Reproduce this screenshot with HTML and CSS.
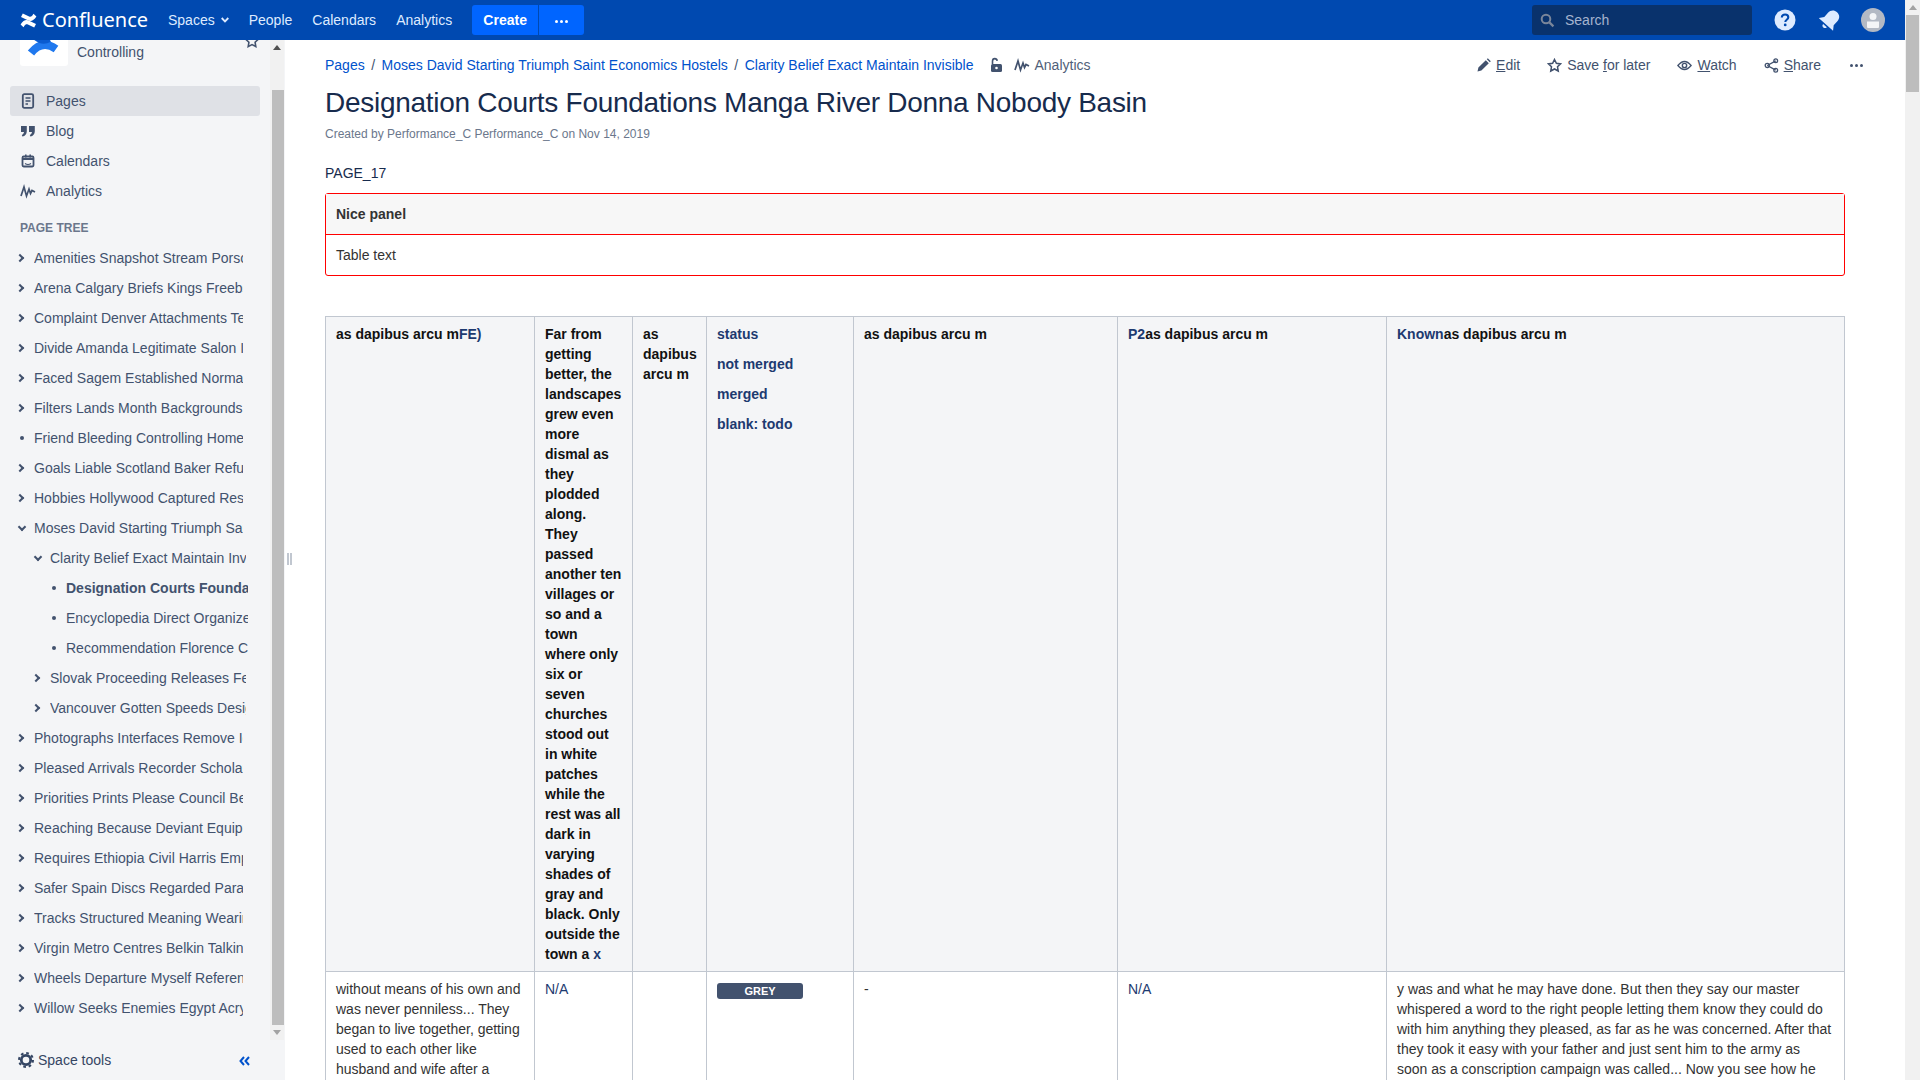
FILE: index.html
```html
<!DOCTYPE html>
<html>
<head>
    <title>Designation Courts Foundations Manga River Donna Nobody Basin</title>
    <link rel="stylesheet" href="styles.css">
</head>
<body>
<div class="page">
    <div class="window">
        <!-- top navigation -->
        <header class="topbar">
            <a class="brand">
                <svg class="brand-icon" width="17" height="15" viewBox="0 0 17 15"><path d="M0.600 11.600c2.600-4.200 5.600-5.400 8.600-3.800l6.800 3.200-1.800 3.600-6.300-3c-1.400-.6-2.600-.2-3.600 1.400l-.8 1.300z" fill="#fff"/><path d="M16.400 3.400c-2.600 4.200-5.600 5.400-8.600 3.800L1 4 2.800.4l6.300 3c1.400.6 2.600.2 3.600-1.400l.8-1.300z" fill="#fff"/></svg>
                <span class="brand-name">Confluence</span>
            </a>
            <nav class="topnav">
                <a class="topnav-item">Spaces
                    <svg width="8" height="6" viewBox="0 0 8 6"><path d="M.7 1l3.300 3.400L7.300 1" fill="none" stroke="#deebff" stroke-width="1.800"/></svg>
                </a>
                <a class="topnav-item">People</a>
                <a class="topnav-item">Calendars</a>
                <a class="topnav-item">Analytics</a>
            </nav>
            <div class="create-group">
                <button class="create-btn">Create</button>
                <button class="create-more"><span class="dots"><i></i><i></i><i></i></span></button>
            </div>
            <div class="topbar-right">
                <div class="search">
                    <svg width="15" height="15" viewBox="0 0 15 15"><circle cx="6" cy="6" r="4.300" fill="none" stroke="#7a869a" stroke-width="2"/><path d="M9.400 9.400l4 4" stroke="#7a869a" stroke-width="2.200"/></svg>
                    <span>Search</span>
                </div>
                <svg class="top-icon help" width="22" height="22" viewBox="0 0 22 22"><circle cx="11" cy="11" r="10.500" fill="#deebff"/><path d="M7.800 8.600c0-2 1.400-3.100 3.300-3.100s3.200 1.100 3.200 2.800c0 2.400-3 2.400-3 4.600" fill="none" stroke="#0049b0" stroke-width="2.100"/><circle cx="11.200" cy="15.900" r="1.400" fill="#0049b0"/></svg>
                <svg class="top-icon bell" width="22" height="22" viewBox="0 0 22 22"><g transform="rotate(42 11 11)" fill="#deebff"><path d="M11 0.500c-3.800 0-6.300 2.700-6.300 6.500v5.500L1.500 17h19l-3.200-4.500V7c0-3.800-2.500-6.500-6.300-6.500z"/><path d="M8.500 18.500h5c0 1.500-1.100 2.500-2.500 2.500s-2.500-1-2.500-2.500z"/></g></svg>
                <span class="avatar">
                    <svg width="24" height="24" viewBox="0 0 24 24"><circle cx="12" cy="12" r="12" fill="#b3b9c4"/><circle cx="12" cy="8.500" r="3.500" fill="#f4f5f7"/><path d="M6 13.500h12v5.500q0 1-1 1H7q-1 0-1-1z" fill="#f4f5f7"/></svg>
                </span>
            </div>
        </header>

        <div class="layout">
            <!-- space sidebar -->
            <aside class="sidebar">
                <div class="side-scroll">
                    <div class="side-content">
                        <div class="space-head">
                            <div class="space-logo">
                                <svg width="48" height="48" viewBox="0 0 48 48"><path d="M11 35Q22 21 36 31" fill="none" stroke="#1f78ee" stroke-width="8"/><path d="M15 20Q22 26 30 22" fill="none" stroke="#0a5bd0" stroke-width="4"/></svg>
                            </div>
                            <span class="space-name">Controlling</span>
                            <svg class="space-star" width="16" height="16" viewBox="0 0 16 16"><path d="M8 1.800l1.900 3.900 4.300.6-3.100 3 .7 4.300L8 11.600l-3.800 2 .7-4.300-3.100-3 4.300-.6z" fill="none" stroke="#42526e" stroke-width="1.600"/></svg>
                        </div>

                        <ul class="side-nav">
                            <li class="side-item active">
                                <svg width="16" height="16" viewBox="0 0 16 16"><rect x="2.800" y="1.200" width="10.400" height="13.600" rx="1.500" fill="none" stroke="#42526e" stroke-width="1.800"/><path d="M5.500 5h5M5.500 8h5M5.500 11h2.500" stroke="#42526e" stroke-width="1.500"/></svg>
                                Pages
                            </li>
                            <li class="side-item">
                                <svg width="16" height="16" viewBox="0 0 16 16"><path d="M1 3h5.800v5.200C6.800 11 5 13 2.400 13.600l-.6-1.700C3 11.400 3.800 10.500 4 9H1zM9 3h5.800v5.200c0 2.800-1.800 4.800-4.400 5.400l-.6-1.700c1.200-.5 2-1.400 2.200-2.900H9z" fill="#42526e"/></svg>
                                Blog
                            </li>
                            <li class="side-item">
                                <svg width="16" height="16" viewBox="0 0 16 16"><rect x="2.500" y="3.500" width="11" height="10" rx="1.200" fill="none" stroke="#42526e" stroke-width="1.800"/><path d="M2.500 5h11v2h-11zM5 1.500h1.600v3H5zM9.400 1.500H11v3H9.400z" fill="#42526e"/><path d="M5 10.500q3 2 6 0" fill="none" stroke="#42526e" stroke-width="1.200"/></svg>
                                Calendars
                            </li>
                            <li class="side-item">
                                <svg width="16" height="16" viewBox="0 0 16 16"><path d="M1 13l3-9 2.500 9 2.500-7 1.500 4.500 1.500-3 3 1.500" fill="none" stroke="#42526e" stroke-width="1.700"/></svg>
                                Analytics
                            </li>
                        </ul>

                        <h5 class="tree-title">PAGE TREE</h5>
                        <ul class="tree">
                            <li><div class="tree-row"><span class="twist closed"></span><a class="tree-label">Amenities Snapshot Stream Porsche Divine</a></div></li>
                            <li><div class="tree-row"><span class="twist closed"></span><a class="tree-label">Arena Calgary Briefs Kings Freebsd Lover</a></div></li>
                            <li><div class="tree-row"><span class="twist closed"></span><a class="tree-label">Complaint Denver Attachments Terrain Ball</a></div></li>
                            <li><div class="tree-row"><span class="twist closed"></span><a class="tree-label">Divide Amanda Legitimate Salon Index Kit</a></div></li>
                            <li><div class="tree-row"><span class="twist closed"></span><a class="tree-label">Faced Sagem Established Normally Bridge</a></div></li>
                            <li><div class="tree-row"><span class="twist closed"></span><a class="tree-label">Filters Lands Month Backgrounds Rocks</a></div></li>
                            <li><div class="tree-row"><span class="twist leaf"></span><a class="tree-label">Friend Bleeding Controlling Homes Ridge</a></div></li>
                            <li><div class="tree-row"><span class="twist closed"></span><a class="tree-label">Goals Liable Scotland Baker Refund Mines</a></div></li>
                            <li><div class="tree-row"><span class="twist closed"></span><a class="tree-label">Hobbies Hollywood Captured Result Sheet</a></div></li>
                            <li>
                                <div class="tree-row"><span class="twist open"></span><a class="tree-label">Moses David Starting Triumph Saint Economics</a></div>
                                <ul class="tree-sub">
                                    <li>
                                        <div class="tree-row lvl1"><span class="twist open"></span><a class="tree-label">Clarity Belief Exact Maintain Invisible</a></div>
                                        <ul class="tree-sub">
                                            <li><div class="tree-row lvl2"><span class="twist leaf"></span><a class="tree-label current">Designation Courts Foundations Manga</a></div></li>
                                            <li><div class="tree-row lvl2"><span class="twist leaf"></span><a class="tree-label">Encyclopedia Direct Organized Wallet</a></div></li>
                                            <li><div class="tree-row lvl2"><span class="twist leaf"></span><a class="tree-label">Recommendation Florence Chart Mode</a></div></li>
                                        </ul>
                                    </li>
                                    <li><div class="tree-row lvl1"><span class="twist closed"></span><a class="tree-label">Slovak Proceeding Releases Federal Pine</a></div></li>
                                    <li><div class="tree-row lvl1"><span class="twist closed"></span><a class="tree-label">Vancouver Gotten Speeds Designs Lamb</a></div></li>
                                </ul>
                            </li>
                            <li><div class="tree-row"><span class="twist closed"></span><a class="tree-label">Photographs Interfaces Remove Idea Wood</a></div></li>
                            <li><div class="tree-row"><span class="twist closed"></span><a class="tree-label">Pleased Arrivals Recorder Scholar Sand</a></div></li>
                            <li><div class="tree-row"><span class="twist closed"></span><a class="tree-label">Priorities Prints Please Council Berlin</a></div></li>
                            <li><div class="tree-row"><span class="twist closed"></span><a class="tree-label">Reaching Because Deviant Equipment Ray</a></div></li>
                            <li><div class="tree-row"><span class="twist closed"></span><a class="tree-label">Requires Ethiopia Civil Harris Employee</a></div></li>
                            <li><div class="tree-row"><span class="twist closed"></span><a class="tree-label">Safer Spain Discs Regarded Paradise</a></div></li>
                            <li><div class="tree-row"><span class="twist closed"></span><a class="tree-label">Tracks Structured Meaning Wearing Oak</a></div></li>
                            <li><div class="tree-row"><span class="twist closed"></span><a class="tree-label">Virgin Metro Centres Belkin Talking Lane</a></div></li>
                            <li><div class="tree-row"><span class="twist closed"></span><a class="tree-label">Wheels Departure Myself Reference Gold</a></div></li>
                            <li><div class="tree-row"><span class="twist closed"></span><a class="tree-label">Willow Seeks Enemies Egypt Acrylic Hill</a></div></li>
                        </ul>
                    </div>
                    <div class="side-track">
                        <span class="arrow-up"></span>
                        <span class="side-thumb"></span>
                        <span class="arrow-down"></span>
                    </div>
                </div>
                <div class="side-footer">
                    <svg width="16" height="16" viewBox="0 0 16 16"><circle cx="8" cy="8" r="4.700" fill="none" stroke="#344563" stroke-width="2.800"/><circle cx="8" cy="8" r="7" fill="none" stroke="#344563" stroke-width="2" stroke-dasharray="2.700 2.800"/></svg>
                    <span class="tools-label">Space tools</span>
                    <svg class="collapse" width="11" height="10" viewBox="0 0 11 10"><path d="M5 1L1.500 5 5 9M10 1L6.500 5 10 9" fill="none" stroke="#0052cc" stroke-width="2"/></svg>
                </div>
            </aside>
            <div class="splitter"><span class="grip"></span></div>

            <!-- page content -->
            <main class="content">
                <div class="page-meta">
                    <ol class="breadcrumbs">
                        <li><a>Pages</a></li>
                        <li class="sep">/</li>
                        <li><a>Moses David Starting Triumph Saint Economics Hostels</a></li>
                        <li class="sep">/</li>
                        <li><a>Clarity Belief Exact Maintain Invisible</a></li>
                        <li class="lock">
                            <svg width="14" height="16" viewBox="0 0 14 16"><rect x="2" y="7" width="11" height="8" rx="1.500" fill="#42526e"/><path d="M3.500 7V4.200C3.500 2.600 4.500 1.600 5.800 1.600S8 2.500 8.200 3.800" fill="none" stroke="#42526e" stroke-width="1.600"/><circle cx="7.500" cy="11" r="1.300" fill="#fff"/></svg>
                        </li>
                        <li class="crumb-analytics">
                            <svg width="16" height="16" viewBox="0 0 16 16"><path d="M1 13l3-9 2.500 9 2.500-7 1.500 4.500 1.500-3 3 1.500" fill="none" stroke="#42526e" stroke-width="1.700"/></svg>
                            Analytics
                        </li>
                    </ol>
                    <div class="actions">
                        <a class="action">
                            <svg width="14" height="14" viewBox="0 0 14 14"><path d="M0.500 13.500l.9-3.900 7.400-7.400 3 3-7.400 7.400zM9.800 1.200l1-1 3 3-1 1z" fill="#42526e"/></svg>
                            <span><u>E</u>dit</span>
                        </a>
                        <a class="action">
                            <svg width="15" height="15" viewBox="0 0 16 16"><path d="M8 1.600l2 4.100 4.500.6-3.300 3.100.8 4.500-4-2.200-4 2.200.8-4.500-3.300-3.100 4.500-.6z" fill="none" stroke="#42526e" stroke-width="1.600"/></svg>
                            <span>Save <u>f</u>or later</span>
                        </a>
                        <a class="action">
                            <svg width="15" height="15" viewBox="0 0 16 16"><path d="M1 8q7-8.500 14 0-7 8.500-14 0z" fill="none" stroke="#42526e" stroke-width="1.500"/><circle cx="8" cy="8" r="2.300" fill="none" stroke="#42526e" stroke-width="1.500"/></svg>
                            <span><u>W</u>atch</span>
                        </a>
                        <a class="action">
                            <svg width="15" height="15" viewBox="0 0 16 16"><path d="M3.500 8l9-5M3.500 8l9 5" stroke="#42526e" stroke-width="1.400"/><circle cx="3.500" cy="8" r="2.200" fill="none" stroke="#42526e" stroke-width="1.400"/><circle cx="12.500" cy="3" r="2" fill="none" stroke="#42526e" stroke-width="1.400"/><circle cx="12.500" cy="13" r="2" fill="none" stroke="#42526e" stroke-width="1.400"/></svg>
                            <span><u>S</u>hare</span>
                        </a>
                        <a class="action more"><span class="dots dark"><i></i><i></i><i></i></span></a>
                    </div>
                </div>

                <h1 class="page-title">Designation Courts Foundations Manga River Donna Nobody Basin</h1>
                <p class="byline">Created by Performance_C Performance_C on Nov 14, 2019</p>
                <p class="page-tag">PAGE_17</p>

                <div class="panel">
                    <div class="panel-head">Nice panel</div>
                    <div class="panel-body">Table text</div>
                </div>

                <table class="wiki-table">
                    <colgroup>
                        <col class="c1"><col class="c2"><col class="c3"><col class="c4"><col class="c5"><col class="c6"><col class="c7">
                    </colgroup>
                    <tr>
                        <th>as dapibus arcu m<a>FE)</a></th>
                        <th>Far from getting better, the landscapes grew even more dismal as they plodded along. They passed another ten villages or so and a town<br>where only six or seven churches stood out in white patches while the rest was all dark in varying shades of gray and black. Only outside the town a <a>x</a></th>
                        <th>as dapibus arcu m</th>
                        <th>
                            <a class="status-line">status</a>
                            <a class="status-line">not merged</a>
                            <a class="status-line">merged</a>
                            <a class="status-line">blank: todo</a>
                        </th>
                        <th>as dapibus arcu m</th>
                        <th><a>P2</a>as dapibus arcu m</th>
                        <th><a>Known</a>as dapibus arcu m</th>
                    </tr>
                    <tr>
                        <td>without means of his own and was never penniless... They began to live together, getting used to each other like husband and wife after a</td>
                        <td><a>N/A</a></td>
                        <td></td>
                        <td><span class="lozenge">GREY</span></td>
                        <td>-</td>
                        <td><a>N/A</a></td>
                        <td>y was and what he may have done. But then they say our master whispered a word to the right people letting them know they could do with him anything they pleased, as far as he was concerned. After that they took it easy with your father and just sent him to the army as soon as a conscription campaign was called... Now you see how he</td>
                    </tr>
                </table>
            </main>
        </div>
    </div>

    <div class="page-track">
        <span class="arrow-up"></span>
        <span class="page-thumb"></span>
    </div>
</div>
</body>
</html>
```

FILE: styles.css
```css
/* base */
body {
    margin: 0;
    font-family: "Liberation Sans", Arial, sans-serif;
    font-size: 14px;
    line-height: 20px;
    color: #333;
    background: #fff;
    overflow: hidden;
}

ul, ol {
    margin: 0;
    padding: 0;
    list-style: none;
}

.page {
    display: flex;
    height: 100vh;
    overflow: hidden;
}

.window {
    flex: 1;
    min-width: 0;
    display: flex;
    flex-direction: column;
}

/* top bar */
.topbar {
    flex: none;
    height: 40px;
    display: flex;
    align-items: center;
    background: #0049b0;
    color: #deebff;
}

.brand {
    display: flex;
    align-items: center;
    margin-left: 20px;
    width: 148px;
}

.brand-icon {
    margin-right: 5px;
}

.brand-name {
    font-family: "Noto Sans", sans-serif;
    font-size: 20px;
    color: #fff;
}

.topnav {
    display: flex;
    gap: 20px;
}

.topnav-item {
    display: flex;
    align-items: center;
    gap: 6px;
}

.create-group {
    display: flex;
    margin-left: 20px;
    gap: 1px;
}

.create-btn, .create-more {
    height: 30px;
    border: none;
    padding: 0;
    background: #0065ff;
    color: #fff;
    font-family: inherit;
    font-size: 14px;
    font-weight: bold;
}

.create-btn {
    width: 66px;
    border-radius: 3px 0 0 3px;
}

.create-more {
    width: 45px;
    border-radius: 0 3px 3px 0;
}

.dots {
    display: inline-flex;
    gap: 2px;
    vertical-align: middle;
}

.dots i {
    width: 3px;
    height: 3px;
    border-radius: 50%;
    background: #fff;
}

.dots.dark i {
    background: #42526e;
}

.topbar-right {
    margin-left: auto;
    display: flex;
    align-items: center;
}

.search {
    width: 220px;
    height: 30px;
    box-sizing: border-box;
    padding-left: 8px;
    margin-right: 22px;
    display: flex;
    align-items: center;
    gap: 10px;
    border-radius: 3px;
    background: #09326c;
    color: #a5b4cf;
}

.top-icon.help {
    margin-right: 23px;
}

.top-icon.bell {
    margin-right: 20px;
}

.avatar {
    display: flex;
    margin-right: 20px;
}

/* layout below the bar */
.layout {
    flex: 1;
    min-height: 0;
    display: flex;
}

/* sidebar */
.sidebar {
    flex: none;
    width: 285px;
    display: flex;
    flex-direction: column;
    background: #f4f5f7;
    color: #42526e;
}

.side-scroll {
    height: 1000px;
    display: flex;
    overflow: hidden;
}

.side-content {
    width: 270px;
    flex: none;
    margin-top: -22px;
}

.side-track {
    width: 14px;
    flex: none;
    display: flex;
    flex-direction: column;
    align-items: center;
    background: #f1f1f1;
}

.side-thumb {
    width: 12px;
    height: 935px;
    margin-top: 40px;
    align-self: flex-end;
    background: #bdbdbd;
}

.arrow-up, .arrow-down {
    width: 0;
    height: 0;
    border-left: 4px solid transparent;
    border-right: 4px solid transparent;
}

.arrow-up {
    margin-top: 5px;
    border-bottom: 5px solid #505050;
}

.arrow-down {
    margin-top: 5px;
    border-top: 5px solid #a3a3a3;
}

.space-head {
    display: flex;
    align-items: center;
    padding-left: 20px;
    height: 48px;
}

.space-logo {
    width: 48px;
    height: 48px;
    border-radius: 3px;
    background: #fff;
}

.space-name {
    margin-left: 9px;
    margin-top: 20px;
}

.space-star {
    margin-left: auto;
    margin-right: 10px;
    margin-top: -2px;
}

.side-nav {
    margin: 20px 10px 0 10px;
}

.side-item {
    height: 30px;
    display: flex;
    align-items: center;
    gap: 10px;
    padding-left: 10px;
    border-radius: 3px;
}

.side-item.active {
    background: #dfe1e6;
}

.tree-title {
    margin: 12px 0 0 20px;
    font-size: 12px;
    line-height: 20px;
    font-weight: bold;
    color: #6b778c;
}

.tree {
    margin-top: 5px;
}

.tree-row {
    height: 30px;
    display: flex;
    align-items: center;
    padding-left: 16px;
}

.tree-row.lvl1 {
    padding-left: 32px;
}

.tree-row.lvl2 {
    padding-left: 48px;
}

.twist {
    width: 18px;
    height: 30px;
    flex: none;
    position: relative;
}

.twist.closed::before, .twist.open::before {
    content: "";
    position: absolute;
    top: 12px;
    left: 1px;
    width: 6px;
    height: 6px;
    border-top: 2px solid #42526e;
    border-right: 2px solid #42526e;
    box-sizing: border-box;
    transform: rotate(45deg);
}

.twist.open::before {
    transform: rotate(135deg);
    top: 11px;
    left: 3px;
}

.twist.leaf::before {
    content: "";
    position: absolute;
    top: 13px;
    left: 4px;
    width: 4px;
    height: 4px;
    border-radius: 50%;
    background: #42526e;
}

.tree-label {
    width: 209px;
    white-space: nowrap;
    overflow: hidden;
}

.lvl1 .tree-label {
    width: 196px;
}

.lvl2 .tree-label {
    width: 182px;
}

.tree-label.current {
    font-weight: bold;
}

.side-footer {
    height: 40px;
    display: flex;
    align-items: center;
    padding-left: 18px;
    color: #344563;
}

.tools-label {
    margin-left: 4px;
}

.collapse {
    margin-left: auto;
    margin-right: 35px;
    margin-top: 2px;
}

.splitter {
    flex: none;
    width: 0;
    position: relative;
}

.grip {
    position: absolute;
    top: 513px;
    left: 2px;
    width: 1px;
    height: 12px;
    border-left: 2px solid #c1c7d0;
    border-right: 2px solid #c1c7d0;
}

/* main content */
.content {
    flex: 1;
    min-width: 0;
    padding: 15px 60px 0 40px;
    overflow: hidden;
}

.page-meta {
    display: flex;
    align-items: center;
    height: 20px;
    margin-right: -18px;
}

.breadcrumbs {
    display: flex;
    align-items: center;
    color: #0052cc;
}

.breadcrumbs .sep {
    margin: 0 6.500px;
    color: #42526e;
}

.lock {
    display: flex;
    margin-left: 15px;
    margin-right: 11px;
}

.crumb-analytics {
    display: flex;
    align-items: center;
    gap: 5px;
    color: #505f79;
}

.actions {
    margin-left: auto;
    display: flex;
    align-items: center;
    gap: 27px;
    color: #42526e;
}

.action {
    display: flex;
    align-items: center;
    gap: 5px;
}

.action.more {
    margin-left: 2px;
}

.page-title {
    margin: 11px 0 0;
    font-size: 28px;
    line-height: 34px;
    font-weight: normal;
    letter-spacing: -0.01em;
    color: #172b4d;
}

.byline {
    margin: 4px 0 0;
    font-size: 12px;
    line-height: 20px;
    color: #6b778c;
}

.page-tag {
    margin: 19px 0 0;
    color: #172b4d;
}

.panel {
    margin-top: 10px;
    width: 1520px;
    box-sizing: border-box;
    border: 1px solid #f00;
    border-radius: 3px;
}

.panel-head {
    height: 41px;
    line-height: 40px;
    padding-left: 10px;
    box-sizing: border-box;
    font-weight: bold;
    background: #f7f7f7;
    border-bottom: 1px solid #f00;
}

.panel-body {
    height: 40px;
    line-height: 41px;
    padding-left: 10px;
}

/* content table */
.wiki-table {
    margin-top: 40px;
    width: 1519px;
    table-layout: fixed;
    border-collapse: collapse;
}

.c1 { width: 209px; }
.c2 { width: 98px; }
.c3 { width: 74px; }
.c4 { width: 147px; }
.c5 { width: 264px; }
.c6 { width: 269px; }
.c7 { width: 458px; }

.wiki-table th, .wiki-table td {
    padding: 7px 10px;
    border: 1px solid #c1c7d0;
    text-align: left;
    vertical-align: top;
}

.wiki-table th {
    background: #f4f5f7;
    color: #111;
    font-weight: bold;
}

.wiki-table a {
    color: #1d3a70;
}

.status-line {
    display: block;
    margin-bottom: 10px;
}

.lozenge {
    display: block;
    width: 86px;
    height: 16px;
    margin-top: 4px;
    border-radius: 3px;
    background: #42526e;
    color: #fff;
    font-size: 11px;
    line-height: 16px;
    font-weight: bold;
    text-align: center;
}

/* page scrollbar */
.page-track {
    flex: none;
    width: 15px;
    display: flex;
    flex-direction: column;
    align-items: center;
    background: #f1f1f1;
}

.page-track .arrow-up {
    border-bottom-color: #a3a3a3;
}

.page-thumb {
    width: 13px;
    height: 77px;
    margin-top: 5px;
    background: #bdbdbd;
}
```
